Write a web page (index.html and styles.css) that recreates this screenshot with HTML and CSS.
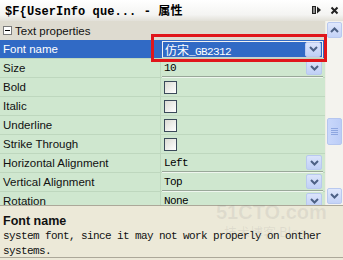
FILE: index.html
```html
<!DOCTYPE html>
<html>
<head>
<meta charset="utf-8">
<link rel="stylesheet" href="styles.css">
</head>
<body>
<div class="win">
  <div class="title">
    <span class="ttext">$F{UserInfo que... - 属性</span>
    <span class="tbtns">
      <svg class="pin" width="10" height="10" viewBox="0 0 10 10"><rect x="0.5" y="1.5" width="3" height="7" fill="none" stroke="#222" stroke-width="1"/><line x1="2" y1="2" x2="2" y2="8" stroke="#222"/><polygon points="5,1.5 9,5 5,8.5" fill="#222"/></svg>
      <svg class="close" width="9" height="9" viewBox="0 0 9 9"><path d="M1.5 1.5 L7.5 7.5 M7.5 1.5 L1.5 7.5" stroke="#222" stroke-width="2"/></svg>
    </span>
  </div>
  <div class="grid">
    <div class="rows">
      <div class="cat"><span class="minus"></span><span>Text properties</span></div>
      <div class="row sel">
        <div class="lbl">Font name</div>
        <div class="val"><div class="combo focus"><span class="ctext"><span class="cjk">仿宋</span>_GB2312</span><span class="dd"><svg width="9" height="6" viewBox="0 0 9 6"><path d="M1 1 L4.5 4.5 L8 1" fill="none" stroke="#4d6185" stroke-width="2"/></svg></span></div></div>
      </div>
      <div class="row">
        <div class="lbl">Size</div>
        <div class="val"><div class="combo"><span class="ctext">10</span><span class="dd"><svg width="9" height="6" viewBox="0 0 9 6"><path d="M1 1 L4.5 4.5 L8 1" fill="none" stroke="#4d6185" stroke-width="2"/></svg></span></div></div>
      </div>
      <div class="row"><div class="lbl">Bold</div><div class="val"><span class="chk"></span></div></div>
      <div class="row"><div class="lbl">Italic</div><div class="val"><span class="chk"></span></div></div>
      <div class="row"><div class="lbl">Underline</div><div class="val"><span class="chk"></span></div></div>
      <div class="row"><div class="lbl">Strike Through</div><div class="val"><span class="chk"></span></div></div>
      <div class="row">
        <div class="lbl">Horizontal Alignment</div>
        <div class="val"><div class="combo"><span class="ctext">Left</span><span class="dd"><svg width="9" height="6" viewBox="0 0 9 6"><path d="M1 1 L4.5 4.5 L8 1" fill="none" stroke="#4d6185" stroke-width="2"/></svg></span></div></div>
      </div>
      <div class="row">
        <div class="lbl">Vertical Alignment</div>
        <div class="val"><div class="combo"><span class="ctext">Top</span><span class="dd"><svg width="9" height="6" viewBox="0 0 9 6"><path d="M1 1 L4.5 4.5 L8 1" fill="none" stroke="#4d6185" stroke-width="2"/></svg></span></div></div>
      </div>
      <div class="row">
        <div class="lbl">Rotation</div>
        <div class="val"><div class="combo"><span class="ctext">None</span><span class="dd"><svg width="9" height="6" viewBox="0 0 9 6"><path d="M1 1 L4.5 4.5 L8 1" fill="none" stroke="#4d6185" stroke-width="2"/></svg></span></div></div>
      </div>
    </div>
    <div class="sb">
      <div class="sbtn"><svg width="9" height="6" viewBox="0 0 9 6"><path d="M1 5 L4.5 1.5 L8 5" fill="none" stroke="#4d6185" stroke-width="2"/></svg></div>
      <div class="track">
        <div class="thumb"><span></span><span></span><span></span><span></span></div>
      </div>
      <div class="sbtn"><svg width="9" height="6" viewBox="0 0 9 6"><path d="M1 1 L4.5 4.5 L8 1" fill="none" stroke="#4d6185" stroke-width="2"/></svg></div>
    </div>
  </div>
  <div class="desc">
    <div class="dtitle">Font name</div>
    <div class="dtext">system font, since it may not work properly on onther systems.</div>
  </div>
  <div class="redbox"></div>
  <div class="wm"><div class="wm1">51CTO.com</div><div class="wm2">技术博客 Blog</div></div>
</div>
</body>
</html>
```

FILE: styles.css
```css
html, body {
  margin: 0;
  padding: 0;
  background: #ece9d8;
}
.win {
  position: relative;
  width: 343px;
  height: 260px;
  overflow: hidden;
  background: #ece9d8;
  font-family: "Liberation Sans", Arial, sans-serif;
  font-size: 11px;
  color: #000;
}
.title {
  height: 21px;
  box-sizing: border-box;
  display: flex;
  align-items: center;
  justify-content: space-between;
  padding: 0 4px 1px 5px;
  background: linear-gradient(#ffffff, #f4f4f2 70%, #e2e0d8);
}
.ttext {
  font-family: "Liberation Mono", "Noto Sans CJK SC", monospace;
  font-weight: bold;
  font-size: 12px;
  letter-spacing: 0.1px;
}
.tbtns {
  display: flex;
  align-items: center;
  gap: 8px;
}
.grid {
  display: flex;
  height: 184px;
  overflow: hidden;
}
.rows {
  flex: 1;
  overflow: hidden;
  background: #cfe7cf;
}
.cat {
  height: 19px;
  display: flex;
  align-items: center;
  gap: 3px;
  padding-left: 3px;
  background: #dedbd0;
  font-size: 11.5px;
  color: #111;
}
.minus {
  width: 9px;
  height: 9px;
  box-sizing: border-box;
  border: 1px solid #7b7b7b;
  background: #fff;
  position: relative;
}
.minus::after {
  content: "";
  position: absolute;
  left: 1px;
  top: 3px;
  width: 5px;
  height: 1px;
  background: #000;
}
.row {
  height: 19px;
  box-sizing: border-box;
  display: grid;
  grid-template-columns: 161px 1fr;
  border-bottom: 1px solid #bed7be;
}
.lbl {
  display: flex;
  align-items: center;
  padding-left: 3px;
  border-right: 1px solid #bed7be;
  font-size: 11.5px;
  color: #111;
}
.row.sel {
  background: #316ac5;
}
.row.sel .lbl {
  color: #fff;
  border-right-color: #316ac5;
}
.val {
  display: flex;
  align-items: center;
  padding-left: 1px;
  padding-right: 2px;
}
.combo {
  flex: 1;
  height: 17px;
  box-sizing: border-box;
  display: flex;
  align-items: center;
  justify-content: space-between;
  border-bottom: 1px solid #9aa89a;
  box-shadow: 0 1px 0 #eef6ee;
}
.combo.focus {
  background: #316ac5;
  border: 1px solid #f2f2f2;
  border-bottom-color: #d0d0d0;
  box-shadow: none;
}
.ctext {
  padding-left: 2px;
  font-family: "Liberation Mono", "Noto Sans CJK SC", monospace;
  font-size: 11px;
  letter-spacing: -0.6px;
  color: #000;
}
.cjk {
  font-family: "Noto Sans CJK SC", sans-serif;
  letter-spacing: 0;
  font-size: 12px;
}
.combo.focus .ctext {
  color: #fff;
}
.dd {
  width: 16px;
  height: 15px;
  box-sizing: border-box;
  border: 1px solid #b9c9ef;
  border-radius: 2px;
  background: linear-gradient(#dbe4fb, #c0d0f6);
  display: flex;
  align-items: center;
  justify-content: center;
  margin-right: 1px;
}
.chk {
  width: 13px;
  height: 13px;
  box-sizing: border-box;
  margin-left: 2px;
  border: 1px solid #3b4a5a;
  background: linear-gradient(135deg, #dcdcd4, #ffffff);
}
.sb {
  width: 17px;
  display: flex;
  flex-direction: column;
  background: #f4f3ee;
  border-left: 1px solid #eeede5;
}
.sbtn {
  height: 16px;
  margin: 1px 1px;
  box-sizing: border-box;
  border: 1px solid #b9c9ef;
  border-radius: 2px;
  background: linear-gradient(#e0e8fc, #c4d3f7);
  display: flex;
  align-items: center;
  justify-content: center;
}
.track {
  flex: 1;
  position: relative;
}
.thumb {
  position: absolute;
  left: 1px;
  right: 1px;
  top: 79px;
  height: 27px;
  box-sizing: border-box;
  border: 1px solid #b5c6ef;
  border-radius: 2px;
  background: linear-gradient(90deg, #c9d7fb, #bccdf7);
  display: flex;
  flex-direction: column;
  align-items: center;
  justify-content: center;
  gap: 1px;
}
.thumb span {
  width: 7px;
  height: 1px;
  background: #8ea6e0;
}
.desc {
  height: 53px;
  box-sizing: border-box;
  border-top: 1px solid #aca899;
  border-bottom: 1px solid #aca899;
  padding: 8px 3px 0 3px;
  background: #ece9d8;
}
.dtitle {
  font-weight: bold;
  font-size: 12.5px;
  line-height: 15px;
  color: #111;
}
.dtext {
  font-family: "Liberation Mono", monospace;
  font-size: 11px;
  letter-spacing: -0.6px;
  line-height: 15px;
  color: #111;
}
.redbox {
  position: absolute;
  left: 151px;
  top: 34px;
  width: 176px;
  height: 28px;
  box-sizing: border-box;
  border: 3px solid #e0151b;
}
.wm {
  position: absolute;
  left: 216px;
  top: 200px;
  white-space: nowrap;
  color: rgba(120, 120, 120, 0.12);
  pointer-events: none;
}
.wm1 {
  font-family: "Liberation Sans", sans-serif;
  font-weight: bold;
  font-size: 20px;
  line-height: 24px;
}
.wm2 {
  font-family: "Noto Sans CJK SC", sans-serif;
  font-size: 13px;
  line-height: 16px;
  padding-left: 8px;
}
```
